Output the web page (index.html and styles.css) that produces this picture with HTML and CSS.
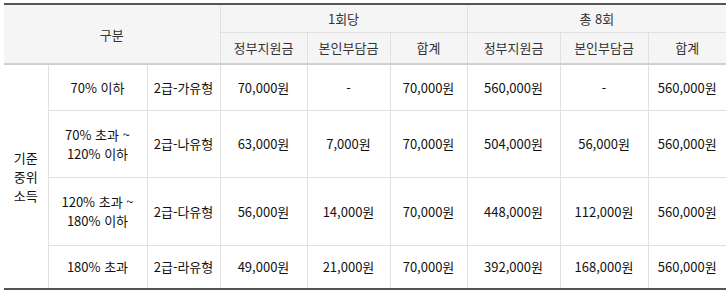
FILE: index.html
```html
<!DOCTYPE html>
<html lang="ko">
<head>
<meta charset="utf-8">
<link rel="stylesheet" href="styles.css">
</head>
<body>
<table class="tbl">
  <colgroup>
    <col class="c1"><col class="c2"><col class="c3"><col class="c4"><col class="c5"><col class="c6"><col class="c7"><col class="c8"><col class="c9">
  </colgroup>
  <thead>
    <tr class="h1">
      <th colspan="3" rowspan="2" class="first">구분</th>
      <th colspan="3">1회당</th>
      <th colspan="3">총 8회</th>
    </tr>
    <tr class="h2">
      <th>정부지원금</th><th>본인부담금</th><th>합계</th>
      <th>정부지원금</th><th>본인부담금</th><th>합계</th>
    </tr>
  </thead>
  <tbody>
    <tr class="r1">
      <td rowspan="4" class="first">기준<br>중위<br>소득</td>
      <td>70% 이하</td><td>2급-가유형</td>
      <td>70,000원</td><td>-</td><td>70,000원</td>
      <td>560,000원</td><td>-</td><td>560,000원</td>
    </tr>
    <tr class="r2">
      <td>70% 초과 ~<br>120% 이하</td><td>2급-나유형</td>
      <td>63,000원</td><td>7,000원</td><td>70,000원</td>
      <td>504,000원</td><td>56,000원</td><td>560,000원</td>
    </tr>
    <tr class="r3">
      <td>120% 초과 ~<br>180% 이하</td><td>2급-다유형</td>
      <td>56,000원</td><td>14,000원</td><td>70,000원</td>
      <td>448,000원</td><td>112,000원</td><td>560,000원</td>
    </tr>
    <tr class="r4">
      <td>180% 초과</td><td>2급-라유형</td>
      <td>49,000원</td><td>21,000원</td><td>70,000원</td>
      <td>392,000원</td><td>168,000원</td><td>560,000원</td>
    </tr>
  </tbody>
</table>
</body>
</html>
```

FILE: styles.css
```css
html, body {
  margin: 0;
  padding: 0;
  background: #fff;
}
body {
  padding: 3px 0 0 4px;
  font-family: "Noto Sans CJK KR", "Noto Sans", sans-serif;
}
.tbl {
  border-collapse: collapse;
  width: 722px;
  table-layout: fixed;
  border-top: 2px solid #555;
  border-bottom: 2px solid #555;
  font-size: 13px;
  line-height: 19px;
  color: #111;
}
.c1 { width: 44px; }
.c2 { width: 99px; }
.c3 { width: 73px; }
.c4 { width: 87px; }
.c5 { width: 83px; }
.c6 { width: 77px; }
.c7 { width: 93px; }
.c8 { width: 88px; }
.c9 { width: 78px; }
.tbl th, .tbl td {
  border: 1px solid #e0e0e0;
  text-align: center;
  vertical-align: middle;
  padding: 0;
}
.tbl th {
  background: #f5f5f5;
  font-weight: normal;
  color: #333;
}
.tbl th.first, .tbl td.first {
  border-left: none;
}
.tbl tr > :last-child {
  border-right: none;
}
.tbl thead tr.h2 th, .tbl thead th.first {
  border-bottom: 2px solid #d0d0d0;
}
.h1 { height: 28px; }
.h2 { height: 32px; }
.r1 { height: 46px; }
.r2 { height: 67px; }
.r3 { height: 68px; }
.r4 { height: 44px; }
```
